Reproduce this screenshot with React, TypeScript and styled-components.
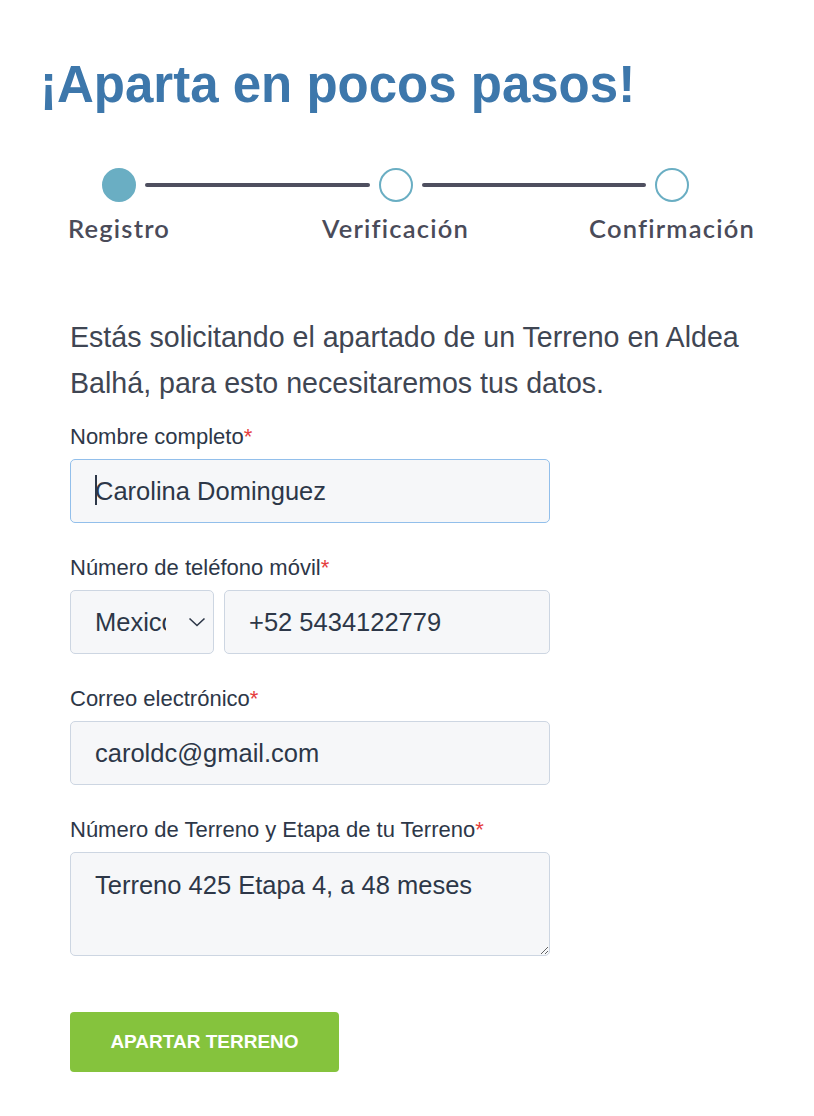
import { Fragment } from 'react';
import styled, { createGlobalStyle } from 'styled-components';

const GlobalStyle = createGlobalStyle`
  * {
    box-sizing: border-box;
  }
  body {
    margin: 0;
    background: #ffffff;
    font-family: 'Liberation Sans', Arial, sans-serif;
  }
`;

const Page = styled.div`
  width: 814px;
  padding: 55px 40px 40px;
`;

const Title = styled.h1`
  margin: 0;
  color: #3d77ab;
  font-family: 'Liberation Sans', Arial, sans-serif;
  font-size: 51px;
  font-weight: 700;
  line-height: 60px;
`;

const Stepper = styled.div`
  display: flex;
  align-items: flex-start;
  width: 587px;
  margin: 53px 0 0 62px;
`;

const Step = styled.div`
  display: flex;
  flex-direction: column;
  align-items: center;
  flex: 0 0 34px;
  width: 34px;
`;

const Dot = styled.div<{ $active?: boolean }>`
  width: 34px;
  height: 34px;
  border-radius: 50%;
  background: ${({ $active }) => ($active ? '#6aaec3' : '#ffffff')};
  border: 2px solid #6aaec3;
`;

const StepLabel = styled.span`
  margin-top: 11px;
  white-space: nowrap;
  color: #4a4b59;
  font-family: Lato, 'Noto Sans', sans-serif;
  font-size: 25.5px;
  font-weight: 600;
  letter-spacing: 1.2px;
  line-height: 30px;
`;

const Connector = styled.div`
  flex: 1;
  height: 4px;
  margin: 15px 9px 0;
  border-radius: 2px;
  background: #4e4f5f;
`;

const Form = styled.form`
  width: 700px;
  margin: 71px 0 0 30px;
  display: flex;
  flex-direction: column;
  align-items: flex-start;
`;

const Intro = styled.p`
  margin: 0 0 14px;
  color: #3f4653;
  font-size: 28.6px;
  line-height: 46px;
`;

const Field = styled.div`
  display: flex;
  flex-direction: column;
  width: 480px;
  margin-bottom: 28px;
`;

const Label = styled.label`
  margin-bottom: 6px;
  color: #2d3748;
  font-size: 22px;
  line-height: 33px;
`;

const Required = styled.span`
  color: #e53e3e;
`;

const InputRow = styled.div`
  position: relative;
  display: flex;
  gap: 10px;
`;

const Input = styled.input<{ $focused?: boolean }>`
  flex: 1 1 auto;
  min-width: 0;
  width: 100%;
  height: 64px;
  padding: 0 24px;
  border: 1px solid ${({ $focused }) => ($focused ? '#92bfeb' : '#cdd6e2')};
  border-radius: 5px;
  background: #f6f7f9;
  color: #2d3748;
  font-family: 'Liberation Sans', Arial, sans-serif;
  font-size: 25.5px;
  outline: none;
`;

const Caret = styled.span`
  position: absolute;
  left: 25px;
  top: 16px;
  width: 1.5px;
  height: 30px;
  background: #2d3748;
`;

const SelectBox = styled.div`
  position: relative;
  flex: 0 0 144px;
`;

const Select = styled.select`
  width: 144px;
  height: 64px;
  padding: 0 47px 0 24px;
  border: 1px solid #cdd6e2;
  border-radius: 5px;
  background: #f6f7f9;
  color: #2d3748;
  font-family: 'Liberation Sans', Arial, sans-serif;
  font-size: 25.5px;
  appearance: none;
  outline: none;
`;

const Chevron = styled.svg`
  position: absolute;
  right: 8px;
  top: 27px;
  pointer-events: none;
`;

const TextArea = styled.textarea`
  width: 100%;
  height: 104px;
  padding: 14px 24px;
  border: 1px solid #cdd6e2;
  border-radius: 5px;
  background: #f6f7f9;
  color: #2d3748;
  font-family: 'Liberation Sans', Arial, sans-serif;
  font-size: 25.5px;
  line-height: 36px;
  outline: none;
`;

const Submit = styled.button`
  margin-top: 28px;
  width: 269px;
  height: 60px;
  border: none;
  border-radius: 4px;
  background: #85c33d;
  color: #ffffff;
  font-family: 'Liberation Sans', Arial, sans-serif;
  font-size: 19px;
  font-weight: 700;
  cursor: pointer;
`;

const steps = ['Registro', 'Verificación', 'Confirmación'];

function App() {
  return (
    <>
      <GlobalStyle />
      <Page>
        <Title>¡Aparta en pocos pasos!</Title>
        <Stepper>
          {steps.map((step, i) => (
            <Fragment key={step}>
              {i > 0 && <Connector />}
              <Step>
                <Dot $active={i === 0} />
                <StepLabel>{step}</StepLabel>
              </Step>
            </Fragment>
          ))}
        </Stepper>
        <Form onSubmit={(e) => e.preventDefault()}>
          <Intro>
            Estás solicitando el apartado de un Terreno en Aldea Balhá, para esto necesitaremos tus
            datos.
          </Intro>
          <Field>
            <Label>
              Nombre completo<Required>*</Required>
            </Label>
            <InputRow>
              <Input $focused defaultValue="Carolina Dominguez" />
              <Caret />
            </InputRow>
          </Field>
          <Field>
            <Label>
              Número de teléfono móvil<Required>*</Required>
            </Label>
            <InputRow>
              <SelectBox>
                <Select defaultValue="mx">
                  <option value="mx">Mexico</option>
                </Select>
                <Chevron width="18" height="10" viewBox="0 0 18 10">
                  <path d="M1.5 1.5 L9 8.5 L16.5 1.5" fill="none" stroke="#2d3748" strokeWidth="1.6" />
                </Chevron>
              </SelectBox>
              <Input defaultValue="+52 5434122779" />
            </InputRow>
          </Field>
          <Field>
            <Label>
              Correo electrónico<Required>*</Required>
            </Label>
            <Input defaultValue="caroldc@gmail.com" />
          </Field>
          <Field>
            <Label>
              Número de Terreno y Etapa de tu Terreno<Required>*</Required>
            </Label>
            <TextArea defaultValue="Terreno 425 Etapa 4, a 48 meses" />
          </Field>
          <Submit type="submit">APARTAR TERRENO</Submit>
        </Form>
      </Page>
    </>
  );
}

export default App;
